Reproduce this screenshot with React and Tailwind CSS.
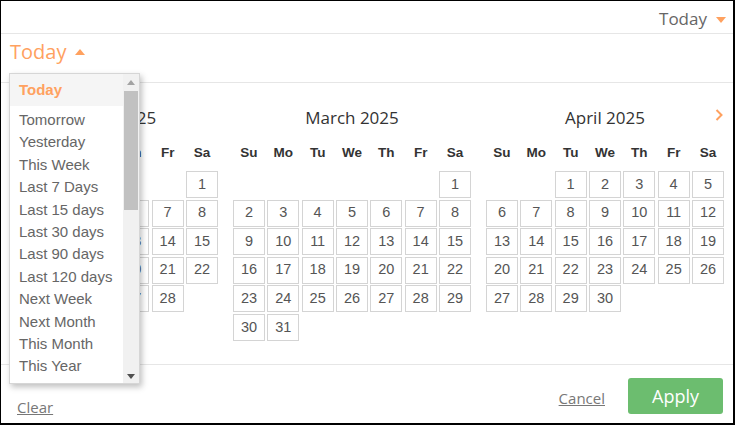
const RANGES = [
  "Tomorrow",
  "Yesterday",
  "This Week",
  "Last 7 Days",
  "Last 15 days",
  "Last 30 days",
  "Last 90 days",
  "Last 120 days",
  "Next Week",
  "Next Month",
  "This Month",
  "This Year",
];

const MONTHS = [
  { title: "February 2025", start: 6, days: 28 },
  { title: "March 2025", start: 6, days: 31 },
  { title: "April 2025", start: 2, days: 30 },
];

const WEEK = ["Su", "Mo", "Tu", "We", "Th", "Fr", "Sa"];

function Month({ title, start, days }) {
  const cells = [...Array(start).fill(null), ...Array.from({ length: days }, (_, i) => i + 1)];
  return (
    <div className="w-[238px] shrink-0">
      <div className="h-[24px] leading-[24px] text-center text-[17px] text-[#333]">{title}</div>
      <div className="mt-[13px] grid grid-cols-7 gap-x-[2.33px] h-[20px] items-center">
        {WEEK.map((d) => (
          <div key={d} className="text-center font-bold text-[13.5px] text-[#333] font-['Liberation_Sans',Arial,sans-serif]">
            {d}
          </div>
        ))}
      </div>
      <div className="mt-[8px] grid grid-cols-7 gap-x-[2.33px] gap-y-[1.6px]">
        {cells.map((n, i) =>
          n ? (
            <div
              key={i}
              className="h-[27px] border border-[#d4d4d4] flex items-center justify-center text-[14.5px] text-[#555] font-['Liberation_Sans',Arial,sans-serif]"
            >
              {n}
            </div>
          ) : (
            <div key={i} className="h-[27px]" />
          )
        )}
      </div>
    </div>
  );
}

export default function App() {
  return (
    <div className="relative w-[735px] h-[425px] overflow-hidden bg-white border border-black border-r-2 border-b-2 flex flex-col font-['Open_Sans',sans-serif]">
      {/* ── Top bar ─────────────────────────────────────────── */}
      <div className="h-[33px] shrink-0 border-b border-[#e6e6e6] flex items-center justify-end pr-[7px] pt-[3px]">
        <span className="text-[17px] text-[#666] leading-none">Today</span>
        <svg width="10" height="6" viewBox="0 0 10 6" className="ml-[9px] mt-[2px]">
          <path d="M0 0h10L5 6z" fill="#ffa15f" />
        </svg>
      </div>

      {/* ── Selected range ──────────────────────────────────── */}
      <div className="h-[49px] shrink-0 border-b border-[#e6e6e6] flex items-start pl-[9px] pt-[4px]">
        <span className="text-[20px] leading-[27px] text-[#ffa15f]">Today</span>
        <svg width="10" height="6" viewBox="0 0 10 6" className="ml-[9px] mt-[11px]">
          <path d="M5 0l5 6H0z" fill="#ffa15f" />
        </svg>
      </div>

      {/* ── Calendars ───────────────────────────────────────── */}
      <div className="relative h-[282px] shrink-0 border-b border-[#e6e6e6] pt-[23px]">
        <div className="ml-[8px] overflow-hidden">
          <div className="flex gap-[15px] ml-[-29px]">
            {MONTHS.map((m) => (
              <Month key={m.title} {...m} />
            ))}
          </div>
        </div>
        <svg width="8" height="12" viewBox="0 0 8 12" className="absolute right-[10px] top-[26px]">
          <path d="M1.5 1l5 5-5 5" fill="none" stroke="#ffa15f" strokeWidth="2" />
        </svg>
      </div>

      {/* ── Footer ──────────────────────────────────────────── */}
      <div className="flex-1 flex items-start pt-[13px] pl-[16px] pr-[10px]">
        <a className="mt-[19px] text-[15px] leading-[20px] text-[#777] underline">Clear</a>
        <div className="ml-auto flex items-start">
          <a className="mt-[10px] text-[15px] leading-[20px] text-[#777] underline">Cancel</a>
          <button className="ml-[23px] w-[95px] h-[36px] rounded-[3px] bg-[#6cbd6f] text-white text-[18px]">
            Apply
          </button>
        </div>
      </div>

      {/* ── Range menu ──────────────────────────────────────── */}
      <div className="absolute left-[8px] top-[72px] w-[131px] h-[311px] bg-white border border-[#d6d6d6] shadow-[2px_3px_6px_rgba(0,0,0,0.25)] flex overflow-hidden font-['Liberation_Sans',Arial,sans-serif]">
        <div className="flex-1 overflow-hidden">
          <div className="h-[32px] bg-[#f5f5f5] flex items-center pl-[9px] text-[15px] font-bold text-[#ffa15f]">
            Today
          </div>
          <div className="pt-[3px]">
            {RANGES.map((r) => (
              <div key={r} className="pl-[9px] leading-[22.4px] text-[15px] text-[#666] whitespace-nowrap">
                {r}
              </div>
            ))}
          </div>
        </div>
        <div className="w-[16px] bg-[#f1f1f1] flex flex-col items-center">
          <svg width="8" height="5" viewBox="0 0 8 5" className="mt-[6px]">
            <path d="M4 0l4 5H0z" fill="#a3a3a3" />
          </svg>
          <div className="mt-[6px] w-[14px] h-[119px] bg-[#c1c1c1]" />
          <svg width="8" height="5" viewBox="0 0 8 5" className="mt-auto mb-[4px]">
            <path d="M0 0h8L4 5z" fill="#505050" />
          </svg>
        </div>
      </div>
    </div>
  );
}
